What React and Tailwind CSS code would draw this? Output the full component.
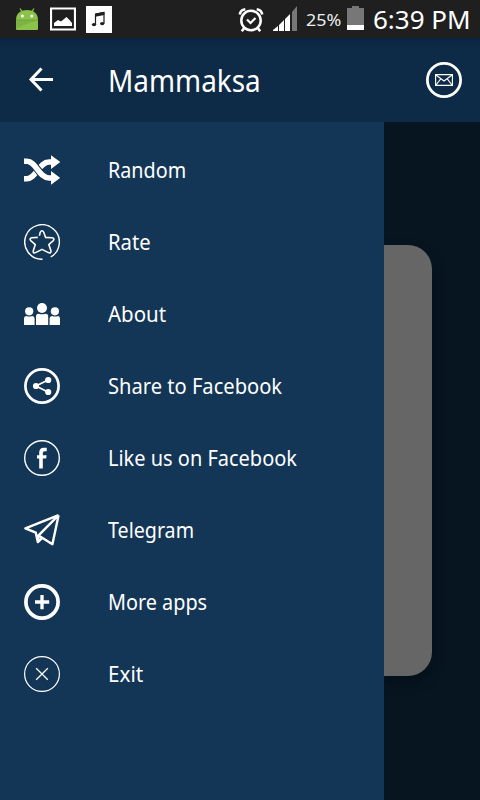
import React from 'react';

const Icon = ({ children, size = 36, className = '' }) => (
  <svg width={size} height={size} viewBox="0 0 36 36" fill="none" stroke="#fff" className={`shrink-0 ${className}`}>
    {children}
  </svg>
);

const RandomIcon = () => (
  <Icon>
    <path d="M0 26.7h3C12 26.7 15 10 25 10h4" strokeWidth="5.4" />
    <path d="M0 9.3h3C12 9.3 15 26 25 26h4" stroke="#133556" strokeWidth="7.6" />
    <path d="M0 9.3h3C12 9.3 15 26 25 26h4" strokeWidth="5.6" />
    <path d="M27 3.3 36.2 10 27 16.9ZM27 19 36.2 25.8 27 32.7Z" fill="#fff" stroke="none" />
  </Icon>
);

const RateIcon = () => (
  <Icon>
    <path d="M18.5 35.3A17.3 17.3 0 1 1 26.7 33" strokeWidth="1.4" />
    <path
      d="M15.4 11.8 16.2 8.4Q18 5.2 19.8 8.4L21.6 13.4 28 13.8Q31 14.4 29.3 16.6L24.8 20.6 27 27Q27 29.8 24.4 28.6L18 25.4 11.6 28.6Q9 29.8 9.2 27L11.3 20.6 6.7 16.6Q5 14.4 8 13.8L13.8 13.4"
      strokeWidth="1.6"
      strokeLinejoin="round"
    />
  </Icon>
);

const AboutIcon = () => (
  <Icon>
    <g fill="#fff" stroke="none">
      <circle cx="18" cy="12" r="5" />
      <circle cx="5.2" cy="15.3" r="4.1" />
      <circle cx="30.9" cy="15.3" r="4.1" />
      <path d="M12 29v-8.5q0-2.8 2.6-2.8Q18 19 21.5 17.7q2.7 0 2.7 2.8V29Z" />
      <path d="M0 29v-6.5Q0 20 2.2 20q3 1.1 6 0 2.4 0 2.4 2.5V29Z" />
      <path d="M25.6 29v-6.5Q25.6 20 28 20q3 1.1 6 0 2 0 2 2.5V29Z" />
    </g>
  </Icon>
);

const ShareIcon = () => (
  <Icon>
    <circle cx="18" cy="18" r="16.6" strokeWidth="2.7" />
    <path d="M24 12 12 18l12 6" strokeWidth="1.8" />
    <g fill="#fff" stroke="none">
      <circle cx="12" cy="18" r="3.1" />
      <circle cx="24.2" cy="12" r="3.1" />
      <circle cx="24.2" cy="24" r="3.1" />
    </g>
  </Icon>
);

const FacebookIcon = () => (
  <Icon>
    <circle cx="18" cy="18" r="17.3" strokeWidth="1.4" />
    <path
      d="M15.2 28.4V18.6H13v-3.4h2.2v-2.4q0-4.9 4.6-5h2.9v3.5h-2.1q-1.8 0-1.8 1.8v2.1h3.8l-.4 3.4h-3.4v9.8Z"
      fill="#fff"
      stroke="none"
    />
  </Icon>
);

const TelegramIcon = () => (
  <Icon>
    <path
      d="M34.6 3.2 1.4 16.3l10.4 4.4 2 9.4 4.2-4M34.6 3.2l-6.2 29L14.6 23.4 34.6 3.2M14.6 23.4l-.8 6.7"
      strokeWidth="2.4"
      strokeLinejoin="round"
    />
  </Icon>
);

const MoreIcon = () => (
  <Icon>
    <circle cx="18" cy="18" r="16.1" strokeWidth="3.7" />
    <path d="M11 18h14.2M18 11v14.2" strokeWidth="3.3" />
  </Icon>
);

const ExitIcon = () => (
  <Icon>
    <circle cx="18" cy="18" r="17.4" strokeWidth="1.2" />
    <path d="m12.2 12.2 11.6 11.6M23.8 12.2 12.2 23.8" strokeWidth="1.3" />
  </Icon>
);

const MailIcon = () => (
  <Icon>
    <circle cx="18" cy="18" r="16.6" strokeWidth="2.8" />
    <path d="M9.6 12.6h16.8v10.8H9.6Z" strokeWidth="1.2" />
    <path d="m10 13 8 6 8-6M10 23l4.7-6.2M26 23l-4.7-6.2" strokeWidth="1.1" />
  </Icon>
);

const items = [
  { label: 'Random', icon: RandomIcon, width: 'scale-x-[.94]' },
  { label: 'Rate', icon: RateIcon, width: 'scale-x-[.965]' },
  { label: 'About', icon: AboutIcon, width: 'scale-x-[.975]' },
  { label: 'Share to Facebook', icon: ShareIcon, width: 'scale-x-[.958]' },
  { label: 'Like us on Facebook', icon: FacebookIcon, width: 'scale-x-[.951]' },
  { label: 'Telegram', icon: TelegramIcon, width: 'scale-x-[.936]' },
  { label: 'More apps', icon: MoreIcon, width: 'scale-x-[.944]' },
  { label: 'Exit', icon: ExitIcon, width: 'scale-x-[.985]' },
];

const StatusBar = () => (
  <div className="flex h-[38px] shrink-0 items-center bg-[#1f1f1f] pl-4">
    <svg width="22" height="24" viewBox="0 0 22 24" className="shrink-0">
      <path d="m4 1.5 2.5 4M18 1.5l-2.5 4" stroke="#8bc34a" strokeWidth="1.3" />
      <path d="M0 13C0 6 5 3 11 3s11 3 11 10v9q0 1-1 1H1q-1 0-1-1Z" fill="#8bc34a" />
      <path d="M0 13h22L8 18 0 22Z" fill="#7cb342" />
      <path d="M0 13h22" stroke="#689f38" strokeWidth=".7" />
      <circle cx="6.4" cy="9" r="1.5" fill="#fff" />
      <circle cx="15.8" cy="9" r="1.5" fill="#fff" />
    </svg>
    <svg width="26" height="24" viewBox="0 0 26 24" className="ml-3 shrink-0">
      <path d="M1 1.5h24v21H1Z" fill="none" stroke="#fff" strokeWidth="2.2" />
      <path d="M4 19v-3l4-3 3 1.5L16.5 10l3 3 2.5 3v3Z" fill="#fff" />
    </svg>
    <svg width="26" height="27" viewBox="0 0 26 27" className="ml-2.5 mt-px shrink-0">
      <path d="M0 0h26v27H0Z" fill="#fff" />
      <path d="M9.5 18.5V8.2L18 6.5v10.8" fill="none" stroke="#1f1f1f" strokeWidth="1.2" />
      <path d="m9.3 7.6 9-1.8v3.2l-9 1.8Z" fill="#1f1f1f" />
      <ellipse cx="8" cy="18.6" rx="2.2" ry="1.7" fill="#1f1f1f" />
      <ellipse cx="16.2" cy="17.6" rx="2.2" ry="1.7" fill="#1f1f1f" />
    </svg>
    <svg width="26" height="26" viewBox="0 0 26 26" fill="none" stroke="#fff" className="ml-[126px] mt-0.5 shrink-0">
      <circle cx="13" cy="13.5" r="9.7" strokeWidth="2.5" />
      <path d="m9 12.5 3.5 3.5 5-5" strokeWidth="2.2" />
      <path d="M1.8 7.5q.5-4.5 5.5-5.2M24.2 7.5q-.5-4.5-5.5-5.2" strokeWidth="2.6" />
      <path d="m6.2 21-2.4 3.2M19.8 21l2.4 3.2" strokeWidth="2.6" />
    </svg>
    <svg width="25" height="25" viewBox="0 0 25 25" className="mb-px ml-[9px] shrink-0">
      <path d="M0 25v-1l5-4v5ZM6 25v-6l5-5v11ZM12 25V13l5-5v17Z" fill="#fff" />
      <path d="M19 25V6l5-6v25Z" fill="#777" />
    </svg>
    <span className="ml-2 w-[41px] shrink-0 origin-left scale-x-[1.05] whitespace-nowrap pt-px text-[17px] leading-6 text-[#eee]">
      25%
    </span>
    <svg width="17" height="24" viewBox="0 0 17 24" className="mb-0.5 shrink-0">
      <path d="M5 0h7v2h5v22H0V2h5Z" fill="#777" />
      <path d="M0 19h17v5H0Z" fill="#fff" />
    </svg>
    <span className="ml-[9px] whitespace-nowrap text-[26px] leading-8 text-white">6:39 PM</span>
  </div>
);

const Header = () => (
  <header className="flex h-[84px] shrink-0 items-center bg-linear-to-b from-[#0a2440] to-[#0d2a46] to-10% pl-6 pr-[18px]">
    <Icon className="mr-12">
      <path d="M17.5 6.5 7 17.5l10.5 11M7 17.5h22" strokeWidth="3" />
    </Icon>
    <h1 className="flex-1 origin-left scale-x-[.93] text-[30px] text-white">Mammaksa</h1>
    <button>
      <MailIcon />
    </button>
  </header>
);

const Drawer = () => (
  <nav className="w-96 shrink-0 bg-[#133556] pt-3">
    {items.map(({ label, icon: ItemIcon, width }) => (
      <a key={label} className="flex h-18 items-center gap-12 pl-6 text-white">
        <ItemIcon />
        <span className={`origin-left whitespace-nowrap pt-0.5 text-[21px] ${width}`}>{label}</span>
      </a>
    ))}
  </nav>
);

export default function App() {
  return (
    <div className="flex h-[800px] w-[480px] flex-col overflow-hidden font-['Noto_Sans',sans-serif]">
      <StatusBar />
      <Header />
      <div className="flex flex-1 bg-[#061520]">
        <Drawer />
        <main className="flex-1 overflow-hidden pt-[123px]">
          <div className="h-[431px] w-12 rounded-r-3xl bg-[#666] shadow-[0_6px_14px_rgba(0,0,0,0.3)]" />
        </main>
      </div>
    </div>
  );
}
